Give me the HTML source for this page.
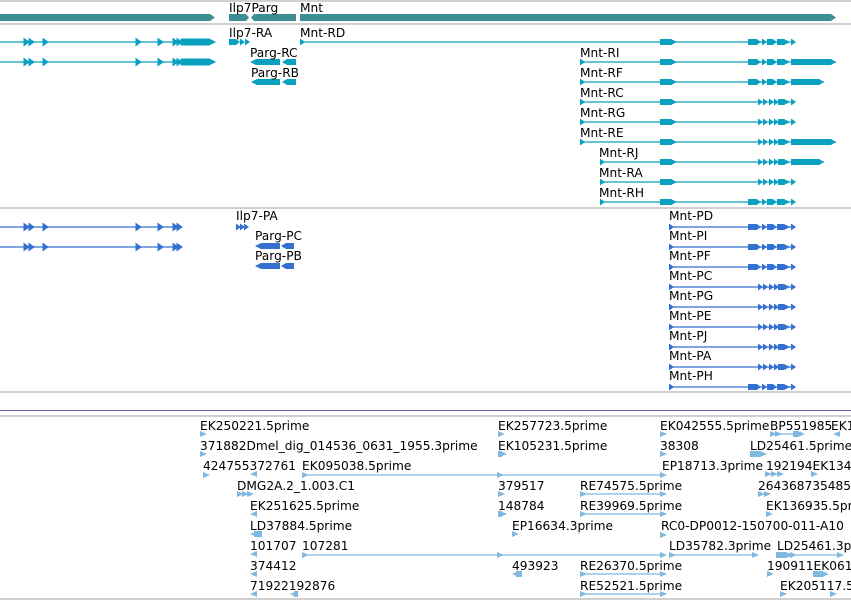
<!DOCTYPE html>
<html><head><meta charset="utf-8"><style>
html,body{margin:0;padding:0;background:#fff;width:851px;height:600px;overflow:hidden}
svg{display:block}
text{font-family:"DejaVu Sans","Liberation Sans",sans-serif;font-size:12.2px;fill:#000}
</style></head><body>
<svg width="851" height="600" viewBox="0 0 851 600" xmlns="http://www.w3.org/2000/svg">
<defs>
<polygon id="t" points="0,-3.5 5,0 0,3.5"/>
<polygon id="tl" points="5,-3.5 0,0 5,3.5"/>
<g id="left">
 <line x1="0" y1="0" x2="213" y2="0" stroke-width="1.2"/>
 <use href="#t" x="24"/><use href="#t" x="29"/><use href="#t" x="43"/><use href="#t" x="136"/><use href="#t" x="158"/><use href="#t" x="173"/><use href="#t" x="177"/>
 <rect x="181" y="-3" width="28" height="6"/><polygon points="209,-3 215,0 209,3"/>
</g>
<g id="leftP">
 <line x1="0" y1="0" x2="180" y2="0" stroke-width="1.2"/>
 <use href="#t" x="24"/><use href="#t" x="29"/><use href="#t" x="43"/><use href="#t" x="136"/><use href="#t" x="158"/><use href="#t" x="173"/><use href="#t" x="177"/>
</g>
<g id="ex1"><rect x="660" y="-3" width="11" height="6"/><polygon points="671,-3 677,0 671,3"/></g>
<g id="tail"><rect x="748" y="-3" width="8" height="6"/><use href="#t" x="756"/><use href="#t" x="762"/><rect x="767" y="-3" width="6" height="6"/><use href="#t" x="772"/><rect x="777" y="-3" width="7" height="6"/><polygon points="784,-3 790,0 784,3"/><use href="#t" x="791"/></g>
<g id="tailS"><use href="#t" x="758"/><use href="#t" x="763"/><use href="#t" x="769"/><use href="#t" x="774"/><rect x="778" y="-3" width="6" height="6"/><polygon points="784,-3 790,0 784,3"/><use href="#t" x="791"/></g>
<polygon id="e" points="0,-3 7,0 0,3"/>
<polygon id="el" points="7,-3 0,0 7,3"/>
</defs>
<g stroke="#c0c0c0" stroke-width="1.5">
<line x1="0" y1="1" x2="851" y2="1"/><line x1="0" y1="24" x2="851" y2="24"/>
<line x1="0" y1="208" x2="851" y2="208"/><line x1="0" y1="392" x2="851" y2="392"/>
<line x1="0" y1="416" x2="851" y2="416"/><line x1="0" y1="599" x2="851" y2="599"/>
</g>
<line x1="0" y1="410.5" x2="851" y2="410.5" stroke="#7060a8" stroke-width="1"/>
<g fill="#3d8f93">
<rect x="0" y="14" width="210" height="7"/><polygon points="210,14 215,17.5 210,21"/>
<polygon points="229,14 246,14 249,17.5 246,21 229,21"/>
<polygon points="254,14 296,14 296,21 254,21 251,17.5"/>
<rect x="300" y="14" width="531" height="7"/><polygon points="831,14 836,17.5 831,21"/>
</g>
<text x="229" y="12">Ilp7Parg</text><text x="300" y="12">Mnt</text>
<g fill="#0aa0c0" stroke="#0aa0c0">
<use href="#left" y="42"/><use href="#left" y="62"/>
</g>
<g fill="#0aa0c0" stroke="none">
<use href="#t" x="229" y="42"/><rect x="229" y="39" width="6" height="6"/><use href="#t" x="235" y="42"/><use href="#t" x="240" y="42"/><use href="#t" x="245" y="42"/>
<polygon points="250,62 256,59 280,59 280,65 256,65"/><polygon points="282,62 287,59 296,59 296,65 287,65"/>
<polygon points="251,82 257,79 280,79 280,85 257,85"/><polygon points="282,82 287,79 296,79 296,85 287,85"/>
</g>
<g fill="#0aa0c0" stroke="#0aa0c0" stroke-width="1.2">
<line x1="300" y1="42" x2="792" y2="42"/><polygon points="300,38.5 305,42 300,45.5" stroke="none"/>
<line x1="580" y1="62" x2="836" y2="62"/><line x1="580" y1="82" x2="824" y2="82"/>
<line x1="580" y1="102" x2="795" y2="102"/><line x1="580" y1="122" x2="795" y2="122"/>
<line x1="580" y1="142" x2="836" y2="142"/><line x1="600" y1="162" x2="824" y2="162"/>
<line x1="600" y1="182" x2="795" y2="182"/><line x1="600" y1="202" x2="795" y2="202"/>
</g>
<g fill="#0aa0c0">
<use href="#ex1" y="42"/><use href="#tail" y="42"/>
<use href="#t" x="580" y="62"/><use href="#ex1" y="62"/><use href="#tail" y="62"/><rect x="791" y="59" width="40" height="6"/><polygon points="831,59 836,62 831,65"/>
<use href="#t" x="580" y="82"/><use href="#ex1" y="82"/><use href="#tail" y="82"/><rect x="791" y="79" width="28" height="6"/><polygon points="819,79 824,82 819,85"/>
<use href="#t" x="580" y="102"/><use href="#ex1" y="102"/><use href="#tailS" y="102"/>
<use href="#t" x="580" y="122"/><use href="#ex1" y="122"/><use href="#tailS" y="122"/>
<use href="#t" x="580" y="142"/><use href="#ex1" y="142"/><use href="#tailS" y="142"/><rect x="791" y="139" width="40" height="6"/><polygon points="831,139 836,142 831,145"/>
<use href="#t" x="600" y="162"/><use href="#ex1" y="162"/><use href="#tailS" y="162"/><rect x="791" y="159" width="28" height="6"/><polygon points="819,159 824,162 819,165"/>
<use href="#t" x="600" y="182"/><use href="#ex1" y="182"/><use href="#tailS" y="182"/>
<use href="#t" x="600" y="202"/><use href="#ex1" y="202"/><use href="#tail" y="202"/>
</g>
<text x="229" y="37">Ilp7-RA</text><text x="300" y="37">Mnt-RD</text>
<text x="250" y="57">Parg-RC</text><text x="251" y="77">Parg-RB</text>
<text x="580" y="57">Mnt-RI</text><text x="580" y="77">Mnt-RF</text><text x="580" y="97">Mnt-RC</text><text x="580" y="117">Mnt-RG</text><text x="580" y="137">Mnt-RE</text>
<text x="599" y="157">Mnt-RJ</text><text x="599" y="177">Mnt-RA</text><text x="599" y="197">Mnt-RH</text>
<g fill="#3370d0" stroke="#3370d0"><use href="#leftP" y="227"/><use href="#leftP" y="247"/></g>
<g fill="#3370d0">
<use href="#t" x="236" y="227"/><use href="#t" x="240" y="227"/><use href="#t" x="244" y="227"/>
<polygon points="255,246 261,243 280,243 280,249 261,249"/><polygon points="281,246 286,243 294,243 294,249 286,249"/>
<polygon points="255,266 261,263 280,263 280,269 261,269"/><polygon points="281,266 286,263 294,263 294,269 286,269"/>
</g>
<g fill="#3370d0" stroke="#3370d0" stroke-width="1.2">
<line x1="669" y1="227" x2="795" y2="227"/><line x1="669" y1="247" x2="795" y2="247"/><line x1="669" y1="267" x2="795" y2="267"/>
<line x1="669" y1="287" x2="795" y2="287"/><line x1="669" y1="307" x2="795" y2="307"/><line x1="669" y1="327" x2="795" y2="327"/>
<line x1="669" y1="347" x2="795" y2="347"/><line x1="669" y1="367" x2="795" y2="367"/><line x1="669" y1="387" x2="795" y2="387"/>
</g>
<g fill="#3370d0">
<use href="#t" x="669" y="227"/><use href="#tail" y="227"/>
<use href="#t" x="669" y="247"/><use href="#tail" y="247"/>
<use href="#t" x="669" y="267"/><use href="#tail" y="267"/>
<use href="#t" x="669" y="287"/><use href="#tailS" y="287"/>
<use href="#t" x="669" y="307"/><use href="#tailS" y="307"/>
<use href="#t" x="669" y="327"/><use href="#tailS" y="327"/>
<use href="#t" x="669" y="347"/><use href="#tailS" y="347"/>
<use href="#t" x="669" y="367"/><use href="#tailS" y="367"/>
<use href="#t" x="669" y="387"/><use href="#tail" y="387"/>
</g>
<text x="236" y="220">Ilp7-PA</text><text x="255" y="240">Parg-PC</text><text x="255" y="260">Parg-PB</text>
<text x="669" y="220">Mnt-PD</text><text x="669" y="240">Mnt-PI</text><text x="669" y="260">Mnt-PF</text><text x="669" y="280">Mnt-PC</text><text x="669" y="300">Mnt-PG</text>
<text x="669" y="320">Mnt-PE</text><text x="669" y="340">Mnt-PJ</text><text x="669" y="360">Mnt-PA</text><text x="669" y="380">Mnt-PH</text>
<g stroke="#80b8e0" stroke-width="1.2">
<line x1="302" y1="475" x2="660" y2="475"/><line x1="302" y1="555" x2="660" y2="555"/>
<line x1="580" y1="494" x2="660" y2="494"/><line x1="580" y1="514" x2="660" y2="514"/>
<line x1="580" y1="574" x2="660" y2="574"/><line x1="580" y1="594" x2="660" y2="594"/>
<line x1="770" y1="434" x2="800" y2="434"/><line x1="669" y1="555" x2="752" y2="555"/><line x1="780" y1="555" x2="837" y2="555"/>
</g>
<g fill="#80b8e0">
<use href="#e" x="200" y="434"/><use href="#e" x="200" y="454"/><use href="#e" x="203" y="475"/><use href="#el" x="250" y="474"/>
<use href="#e" x="302" y="475"/><use href="#e" x="497" y="475"/><use href="#e" x="660" y="475"/>
<use href="#e" x="237" y="494"/><use href="#e" x="242" y="494"/><use href="#e" x="247" y="494"/>
<use href="#el" x="250" y="514"/><rect x="254" y="531" width="8" height="6"/><use href="#el" x="250" y="534"/>
<use href="#el" x="250" y="554"/><use href="#e" x="302" y="555"/><use href="#e" x="497" y="555"/><use href="#e" x="660" y="555"/>
<use href="#el" x="250" y="574"/><use href="#el" x="250" y="594"/><use href="#el" x="290" y="594"/><rect x="294" y="591" width="4" height="6"/>
<use href="#e" x="498" y="434"/><rect x="498" y="451" width="4" height="6"/><use href="#e" x="500" y="454"/>
<use href="#e" x="498" y="494"/><rect x="498" y="511" width="4" height="6"/><use href="#e" x="500" y="514"/>
<use href="#e" x="512" y="534"/><rect x="516" y="571" width="6" height="6"/><use href="#el" x="512" y="574"/>
<use href="#e" x="580" y="494"/><use href="#e" x="580" y="514"/><use href="#e" x="580" y="574"/><use href="#e" x="580" y="594"/>
<use href="#e" x="660" y="494"/><use href="#e" x="660" y="514"/><use href="#e" x="660" y="574"/><use href="#e" x="660" y="594"/>
<use href="#e" x="660" y="434"/><use href="#e" x="660" y="454"/><use href="#e" x="660" y="535"/><use href="#e" x="669" y="555"/><use href="#e" x="752" y="555"/>
<use href="#e" x="770" y="434"/><use href="#e" x="775" y="434"/><rect x="793" y="431" width="5" height="6"/><use href="#e" x="798" y="434"/><use href="#el" x="833" y="434"/>
<rect x="750" y="451" width="10" height="6"/><use href="#e" x="760" y="454"/>
<use href="#e" x="765" y="474"/><use href="#e" x="771" y="474"/><use href="#e" x="777" y="474"/><use href="#e" x="811" y="474"/>
<use href="#e" x="758" y="494"/><use href="#e" x="764" y="494"/><use href="#e" x="766" y="514"/>
<rect x="776" y="552" width="10" height="6"/><use href="#e" x="786" y="555"/><use href="#e" x="790" y="555"/><use href="#e" x="837" y="555"/>
<use href="#e" x="767" y="574"/><rect x="813" y="571" width="10" height="6"/><use href="#e" x="822" y="574"/><use href="#e" x="780" y="594"/><use href="#e" x="830" y="594"/>
</g>
<text x="200" y="430">EK250221.5prime</text>
<text x="200" y="450">371882Dmel_dig_014536_0631_1955.3prime</text>
<text x="203" y="470">424755372761</text><text x="302" y="470">EK095038.5prime</text>
<text x="237" y="490">DMG2A.2_1.003.C1</text>
<text x="250" y="510">EK251625.5prime</text>
<text x="250" y="530">LD37884.5prime</text>
<text x="250" y="550">101707</text><text x="302" y="550">107281</text>
<text x="250" y="570">374412</text>
<text x="250" y="590">71922192876</text>
<text x="498" y="430">EK257723.5prime</text><text x="498" y="450">EK105231.5prime</text>
<text x="498" y="490">379517</text><text x="498" y="510">148784</text>
<text x="512" y="530">EP16634.3prime</text><text x="512" y="570">493923</text>
<text x="580" y="490">RE74575.5prime</text><text x="580" y="510">RE39969.5prime</text>
<text x="580" y="570">RE26370.5prime</text><text x="580" y="590">RE52521.5prime</text>
<text x="660" y="430">EK042555.5prime</text><text x="770" y="430">BP551985</text><text x="831" y="430">EK1</text>
<text x="660" y="450">38308</text><text x="750" y="450">LD25461.5prime</text>
<text x="662" y="470">EP18713.3prime</text><text x="766" y="470">192194EK134</text>
<text x="758" y="490">264368735485</text>
<text x="766" y="510">EK136935.5prime</text>
<text x="661" y="530">RC0-DP0012-150700-011-A10</text>
<text x="669" y="550">LD35782.3prime</text><text x="777" y="550">LD25461.3prime</text>
<text x="767" y="570">190911EK061</text>
<text x="780" y="590">EK205117.5</text>
</svg>
</body></html>
